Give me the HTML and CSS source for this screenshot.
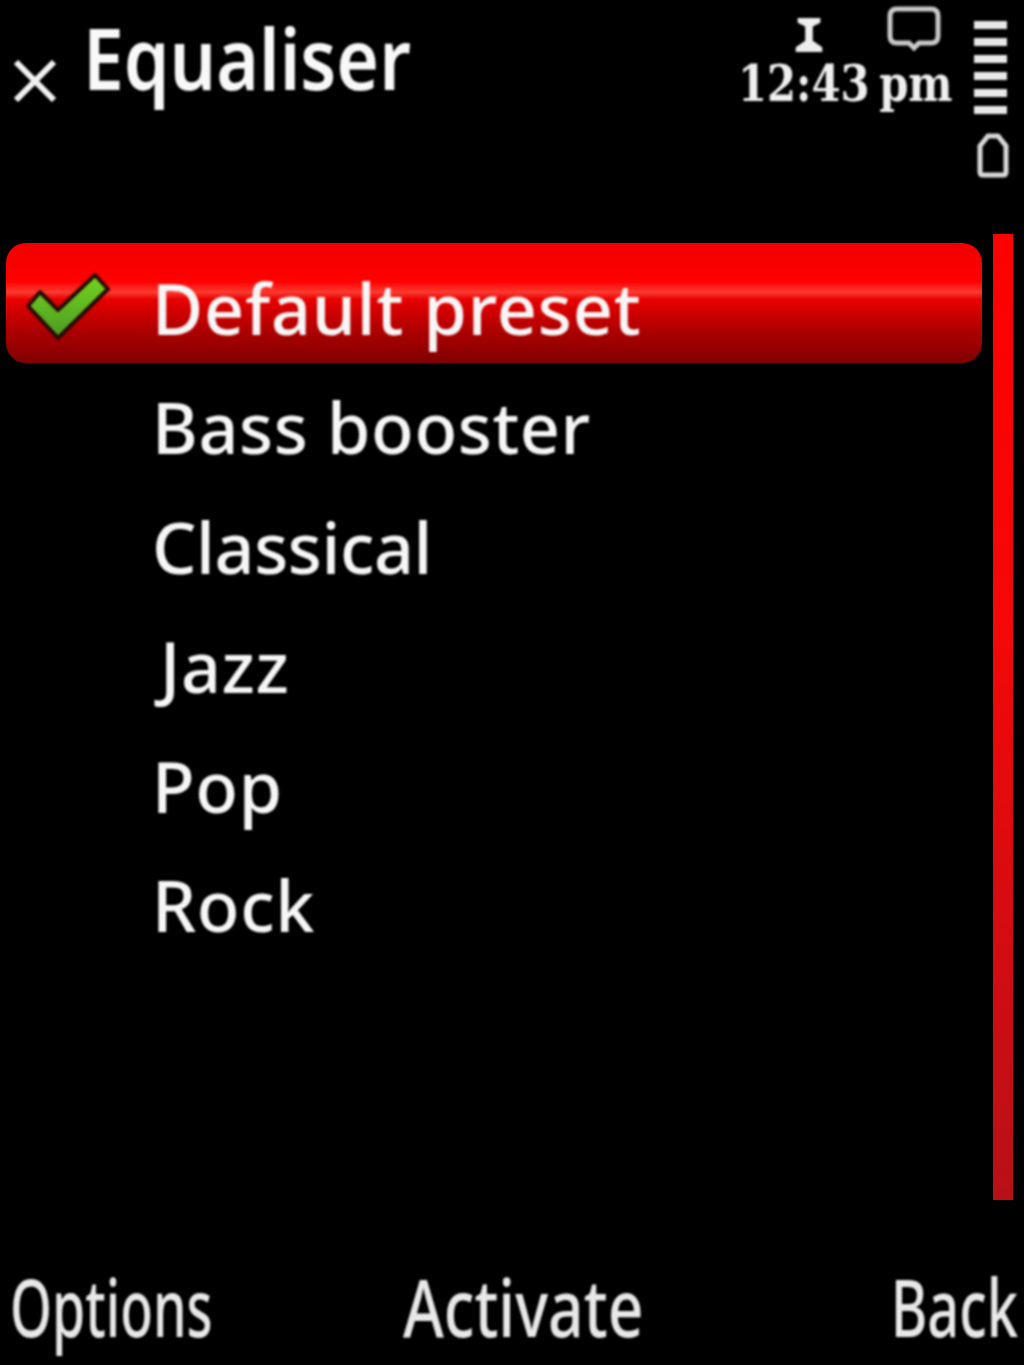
FILE: index.html
```html
<!DOCTYPE html>
<html lang="en">
<head>
<meta charset="utf-8">
<title>Equaliser</title>
<link rel="stylesheet" href="styles.css">
</head>
<body>
<div class="screen">
  <header class="top">
    <svg class="close" viewBox="0 0 44 42"><path d="M3 2 L41 40 M41 2 L3 40"/></svg>
    <h1 class="title">Equaliser</h1>
    <div class="status">
      <div class="status-icons">
        <svg class="cursor" viewBox="0 0 30 38"><path d="M3 1 H27 V6 L19 10 V25 L29 32 V37 H1 V32 L11 25 V10 L3 6 Z"/></svg>
        <svg class="bubble" viewBox="0 0 54 46"><path d="M10 3 H44 Q51 3 51 10 V30 Q51 37 44 37 H32 L27 42 L22 37 H10 Q3 37 3 30 V10 Q3 3 10 3 Z"/></svg>
      </div>
      <div class="time">12:43 pm</div>
    </div>
    <div class="indicators">
      <div class="bars"><i></i><i></i><i></i><i></i><i></i><i></i></div>
      <svg class="battery" viewBox="0 0 32 46"><path d="M3 14 L11 4 H21 L29 14 V40 Q29 43 26 43 H6 Q3 43 3 40 Z"/></svg>
    </div>
  </header>
  <main class="content">
    <ul class="list">
      <li class="row selected">
        <svg class="check" viewBox="0 0 84 72">
          <defs><linearGradient id="green" x1="0" y1="0" x2="0" y2="1"><stop offset="0" stop-color="#74d41e"/><stop offset="1" stop-color="#4c9a24"/></linearGradient></defs>
          <path class="check-edge" d="M2 36 L14 22 L32 40 L69 5 L82 19 L32 68 Z"/>
        </svg>
        <span class="label label-wide">Default preset</span>
      </li>
      <li class="row"><span class="label">Bass booster</span></li>
      <li class="row"><span class="label label-tight">Classical</span></li>
      <li class="row"><span class="label label-j">Jazz</span></li>
      <li class="row"><span class="label">Pop</span></li>
      <li class="row"><span class="label">Rock</span></li>
    </ul>
    <div class="scrollbar"></div>
  </main>
  <footer class="softkeys">
    <span class="key key-left">Options</span>
    <span class="key key-mid">Activate</span>
    <span class="key key-right">Back</span>
  </footer>
</div>
</body>
</html>
```
FILE: styles.css
```css
* { box-sizing: border-box; }
html, body { margin: 0; padding: 0; background: #000; }
.screen {
  width: 1024px;
  height: 1365px;
  background: #000;
  color: #fff;
  font-family: "Noto Sans", "Open Sans", sans-serif;
  display: flex;
  flex-direction: column;
  overflow: hidden;
}
.top {
  height: 234px;
  flex: none;
  display: flex;
  align-items: flex-start;
  position: relative;
}
.close {
  width: 44px;
  height: 42px;
  margin: 60px 0 0 13px;
  flex: none;
  filter: blur(1px);
}
.close path { fill: none; stroke: #f2f2f2; stroke-width: 6; }
.title {
  margin: 5px 0 0 26px;
  font-size: 85px;
  line-height: 104px;
  font-weight: 600;
  color: #f8f8f8;
  transform: scaleX(.86);
  transform-origin: 0 50%;
  white-space: nowrap;
  filter: blur(1.1px);
}
.status {
  position: absolute;
  left: 738px;
  top: 5px;
  width: 216px;
  display: flex;
  flex-direction: column;
}
.status-icons {
  display: flex;
  align-items: flex-start;
  height: 50px;
  filter: blur(1.3px);
}
.cursor { width: 30px; height: 36px; margin: 12px 0 0 56px; fill: #eee; flex: none; }
.bubble { width: 54px; height: 46px; margin: 1px 0 0 63px; fill: none; stroke: #c8c8c8; stroke-width: 5; flex: none; }
.time {
  font-family: "DejaVu Serif", serif;
  font-size: 50px;
  font-weight: 700;
  line-height: 58px;
  word-spacing: -6px;
  color: #efefef;
  white-space: nowrap;
  transform: scaleX(.835);
  transform-origin: 0 50%;
  filter: blur(1.2px);
}
.indicators {
  position: absolute;
  left: 974px;
  top: 21px;
  width: 36px;
  display: flex;
  flex-direction: column;
  filter: blur(1.2px);
}
.bars { display: flex; flex-direction: column; gap: 9.5px; width: 33px; }
.bars i { display: block; height: 7.5px; background: #e8e8e8; }
.battery { width: 32px; height: 46px; margin: 18px 0 0 3px; fill: none; stroke: #d8d8d8; stroke-width: 5; }
.content {
  height: 966px;
  flex: none;
  display: flex;
  align-items: flex-start;
  padding: 0 11px 0 6px;
}
.list {
  list-style: none;
  margin: 9px 0 0;
  padding: 0;
  width: 976px;
  flex: none;
}
.row {
  height: 119.5px;
  padding: 10px 0 0 146px;
  display: flex;
  align-items: center;
  position: relative;
}
.label {
  font-size: 70px;
  font-weight: 500;
  letter-spacing: .6px;
  line-height: 90px;
  color: #f6f6f6;
  white-space: nowrap;
  filter: blur(1.1px);
}
.label-wide { letter-spacing: .9px; }
.label-tight { letter-spacing: -.4px; }
.label-j { margin-left: 8px; }
.selected {
  border-radius: 20px;
  background: linear-gradient(180deg, #f00000 0%, #ff0000 32%, #fb3a30 41%, #e80000 47%, #b00000 72%, #800000 100%);
}
.check { position: absolute; left: 20px; top: 27px; width: 84px; height: 72px; filter: blur(.8px); }
.check-edge { fill: url(#green); stroke: #2a0a00; stroke-width: 4; stroke-linejoin: round; }
.scrollbar {
  width: 20px;
  height: 966px;
  margin-left: 11px;
  flex: none;
  background: linear-gradient(180deg, #ff0000 0%, #f40808 40%, #b81018 100%);
  filter: blur(.6px);
}
.softkeys {
  flex: 1;
  display: flex;
  justify-content: space-between;
  align-items: flex-start;
  padding: 61px 6px 0 10px;
}
.key {
  font-size: 80px;
  font-weight: 500;
  line-height: 90px;
  color: #e8e8e8;
  display: inline-block;
  white-space: nowrap;
  filter: blur(1.2px);
}
.key-left { transform: scaleX(.67); transform-origin: 0 50%; }
.key-mid { transform: translateX(-51px) scaleX(.78); transform-origin: 50% 50%; }
.key-right { transform: scaleX(.7); transform-origin: 100% 50%; }
```
